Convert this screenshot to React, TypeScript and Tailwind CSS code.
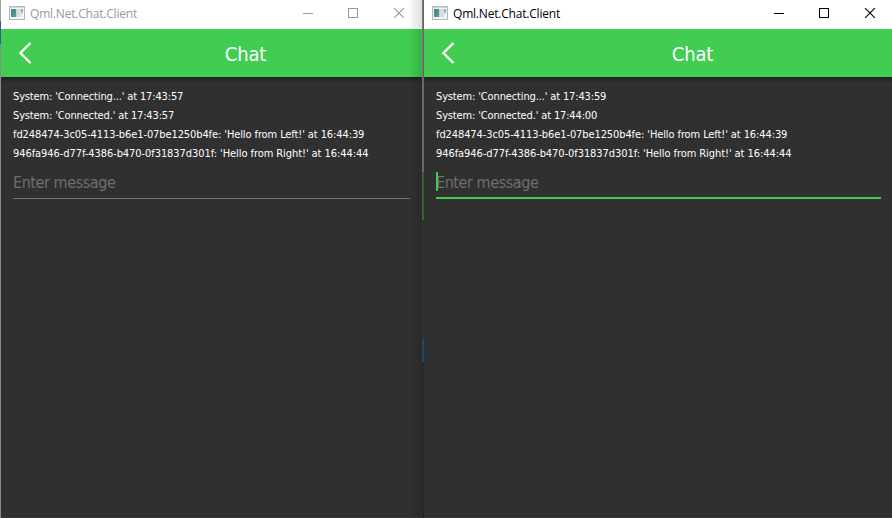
type Line = { text: string; spacing: string };

function AppIcon() {
  return (
    <svg width="16" height="14" viewBox="0 0 16 14" shapeRendering="crispEdges" className="mb-px block shrink-0">
      <defs>
        <linearGradient id="pane" x1="0" y1="0" x2="0.7" y2="1">
          <stop offset="0" stopColor="#4b78ae" />
          <stop offset="1" stopColor="#4fa476" />
        </linearGradient>
      </defs>
      <rect width="16" height="14" fill="#b4b7ba" />
      <rect x="1" y="1" width="14" height="12" fill="#f4f5f6" />
      <rect x="1" y="1" width="14" height="1" fill="#d5d8da" />
      <rect x="2" y="3" width="6" height="8" fill="#c9d3d8" />
      <rect x="2" y="3" width="5" height="8" fill="url(#pane)" />
      <rect x="8" y="3" width="4" height="8" fill="#dcdcdc" />
      <rect x="12" y="3" width="2" height="3" fill="#86b5c4" />
      <rect x="12" y="6" width="2" height="2" fill="#b9dcc3" />
    </svg>
  );
}

function WindowButtons({ color }: { color: string }) {
  return (
    <div className="flex shrink-0">
      <div className="flex h-[27px] w-[45px] items-center justify-center">
        <svg width="10" height="11" shapeRendering="crispEdges" fill={color}>
          <rect y="5" width="10" height="1" />
        </svg>
      </div>
      <div className="flex h-[26px] w-[45px] items-center justify-center">
        <svg width="10" height="10" fill="none" stroke={color}>
          <rect x="0.5" y="0.5" width="9" height="9" />
        </svg>
      </div>
      <div className="flex h-[26px] w-[47px] items-center justify-center">
        <svg width="10" height="10" fill="none" stroke={color} strokeWidth="1.1">
          <path d="M0 0L10 10M10 0L0 10" />
        </svg>
      </div>
    </div>
  );
}

function ChatWindow({ active, lines, className }: { active: boolean; lines: Line[]; className: string }) {
  return (
    <section className={`flex h-full flex-col overflow-hidden bg-[#303030] ${className}`}>
      <div className="flex h-[29px] shrink-0 bg-white pl-2">
        <div className="flex h-[27px] grow items-center gap-[5px]">
          <AppIcon />
          <span
            className={`whitespace-nowrap font-['Open_Sans',sans-serif] text-[12px] leading-[16px] tracking-[-0.2px] ${
              active ? "text-black" : "text-[#999999]"
            }`}
          >
            Qml.Net.Chat.Client
          </span>
        </div>
        <WindowButtons color={active ? "#000000" : "#999999"} />
      </div>
      <header className="flex h-12 shrink-0 items-center bg-[#41cd52] shadow-[0_3px_3px_rgba(0,0,0,0.3)]">
        <div className="flex w-12 shrink-0 items-center justify-center">
          <svg width="14" height="22" fill="none" stroke="#ffffff" strokeWidth="2.4" className="block">
            <path d="M12.5 1L2.4 11L12.5 21" />
          </svg>
        </div>
        <h1 className="grow whitespace-nowrap pt-px pl-[20px] text-center text-[20px] leading-6 tracking-[-0.15px] text-white">Chat</h1>
      </header>
      <div className="flex flex-col px-3 pt-[10px]">
        {lines.map((line) => (
          <p key={line.text} className={`h-[19px] whitespace-nowrap text-[11px] leading-[19px] text-white ${line.spacing}`}>
            {line.text}
          </p>
        ))}
        <div
          className={`flex h-[36px] items-start pt-[9px] ${
            active ? "border-b-2 border-[#41cd52]" : "border-b border-[#757575]"
          }`}
        >
          <div className="relative h-[19px]">
            {active && <span className="absolute top-0 left-0 h-[19px] w-[2px] bg-[#41cd52]" />}
            <span className="block whitespace-nowrap pt-px text-[16px] leading-[19px] tracking-[-0.43px] text-[#6e6e6e]">
              Enter message
            </span>
          </div>
        </div>
      </div>
      <div className="mt-auto h-px shrink-0 bg-[#3a3a3a]" />
    </section>
  );
}

const shared: Line[] = [
  { text: "fd248474-3c05-4113-b6e1-07be1250b4fe: 'Hello from Left!' at 16:44:39", spacing: "tracking-[-0.1px]" },
  { text: "946fa946-d77f-4386-b470-0f31837d301f: 'Hello from Right!' at 16:44:44", spacing: "tracking-[-0.07px]" },
];

const left: Line[] = [
  { text: "System: 'Connecting...' at 17:43:57", spacing: "tracking-[-0.14px]" },
  { text: "System: 'Connected.' at 17:43:57", spacing: "tracking-[-0.15px]" },
  ...shared,
];

const right: Line[] = [
  { text: "System: 'Connecting...' at 17:43:59", spacing: "tracking-[-0.14px]" },
  { text: "System: 'Connected.' at 17:44:00", spacing: "tracking-[-0.15px]" },
  ...shared,
];

export default function App() {
  return (
    <main className="flex h-[518px] w-[892px] overflow-hidden bg-[#303030] font-['DejaVu_Sans_Condensed','DejaVu_Sans',sans-serif]">
      <div className="flex w-px shrink-0 flex-col bg-[#858990]">
        <div className="h-[21px] bg-[#a1a1a1]" />
        <div className="h-[23px] bg-[#315c91]" />
      </div>
      <div className="relative h-full w-[421px] shrink-0">
        <ChatWindow active={false} lines={left} className="w-full" />
        <div className="absolute inset-y-0 right-0 w-[14px] bg-linear-to-r from-transparent to-black/13" />
      </div>
      <div className="flex w-[2px] shrink-0 flex-col">
        <div className="h-[77px] bg-linear-to-r from-[#858585] to-[#5b5b5b]" />
        <div className="h-[95px] bg-linear-to-r from-[#72757a] to-[#5f6063]" />
        <div className="h-12 bg-linear-to-r from-[#317d3d] to-[#28572e]" />
        <div className="h-[119px] bg-linear-to-r from-[#383838] to-[#292929]" />
        <div className="h-[23px] bg-[#1d476d]" />
        <div className="grow bg-linear-to-r from-[#303030] to-[#222222]" />
      </div>
      <ChatWindow active lines={right} className="w-[469px] shrink-0" />
    </main>
  );
}
